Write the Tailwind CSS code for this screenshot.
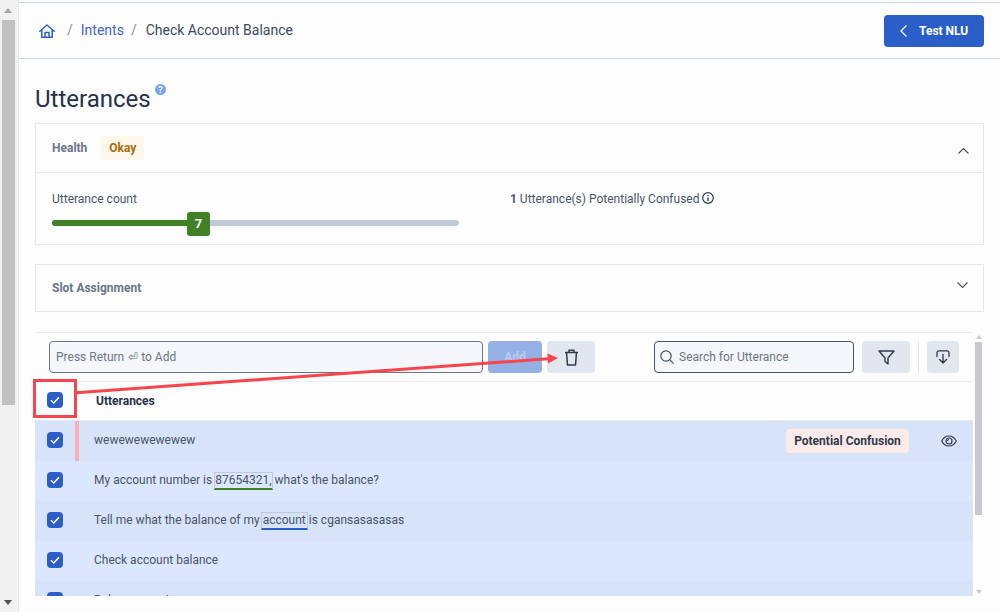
<!DOCTYPE html>
<html>
<head>
<meta charset="utf-8">
<script src="https://cdn.jsdelivr.net/npm/@tailwindcss/browser@4"></script>
</head>
<body class="bg-[#fdfdfd] font-['Roboto',sans-serif] text-[#4a5568]">
<div class="relative flex h-[612px] w-[1000px] overflow-hidden">
  <aside class="flex w-[18px] shrink-0 flex-col items-center bg-[#f1f1f1] pr-[2px]">
    <div class="flex h-[20px] items-center justify-center"><div class="h-0 w-0 border-x-[4px] border-b-[5px] border-x-transparent border-b-[#a3a3a3]"></div></div>
    <div class="h-[385px] w-[13px] bg-[#c1c1c1]"></div>
    <div class="flex-1"></div>
    <div class="flex h-[20px] items-center justify-center"><div class="h-0 w-0 border-x-[4px] border-t-[5px] border-x-transparent border-t-[#505050]"></div></div>
  </aside>
  <main class="flex min-w-0 flex-1 flex-col border-l border-[#e3e9f3]">
    <header class="mt-[2px] flex h-[57px] shrink-0 items-center justify-between border-y border-[#ccd3e0] pr-[16px] pl-[20px]">
      <nav class="flex items-center text-[14px]">
        <svg class="h-[14px] w-[16px] text-[#2b5fc7]" viewBox="0 0 16 14" fill="none" stroke="currentColor" stroke-width="1.5" stroke-linejoin="round" stroke-linecap="round"><path d="M.8 7.200 8 1l7.200 6.200M2.800 5.500v7.800h10.400V5.500M6 13.200V8.600h4v4.600"/></svg>
        <span class="ml-[12px] text-[#8a94a6]">/</span>
        <span class="ml-[8px] text-[#3f67cf]">Intents</span>
        <span class="ml-[7px] text-[#8a94a6]">/</span>
        <span class="ml-[9px] text-[#3e4a5c]">Check Account Balance</span>
      </nav>
      <button class="flex h-[32px] w-[100px] items-center rounded-[4px] bg-[#2b5fc7] pl-[16px] text-[12px] font-bold text-white">
        <svg class="mr-[12px] h-[12px] w-[7px]" viewBox="0 0 7 12" fill="none" stroke="currentColor" stroke-width="1.2"><path d="M6.500.5 1 6l5.500 5.500"/></svg>
        Test NLU
      </button>
    </header>

    <div class="flex min-h-0 flex-1 flex-col pr-[16px] pl-[16px]">
      <div class="flex h-[64px] shrink-0 items-start pt-[24px]">
        <h1 class="text-[24px] leading-[32px] text-[#263249]">Utterances</h1>
        <svg class="mt-[1px] ml-[4px] h-[11px] w-[11px]" viewBox="0 0 12 12"><circle cx="6" cy="6" r="6" fill="#77a3f3"/><text x="6" y="9.500" text-anchor="middle" font-size="9.500" font-weight="700" fill="#fff" font-family="Roboto">?</text></svg>
      </div>

      <section class="h-[122px] shrink-0 border border-[#e4e7f0]">
        <div class="flex h-[49px] items-center justify-between border-b border-[#e4e7f0] pr-[14px] pl-[16px]">
          <div class="flex items-center gap-[14px]">
            <span class="text-[12px] font-bold text-[#6b7688]">Health</span>
            <span class="flex h-[24px] items-center rounded-[4px] bg-[#fdf8ea] px-[8px] text-[12px] font-bold text-[#a86c10]">Okay</span>
          </div>
          <svg class="mt-[6px] h-[6px] w-[11px] text-[#465062]" viewBox="0 0 11 6" fill="none" stroke="currentColor" stroke-width="1.1"><path d="M.5 5.500 5.500.5l5 5"/></svg>
        </div>
        <div class="flex pl-[16px]">
          <div class="w-[458px] shrink-0">
            <div class="pt-[19px] text-[12px] leading-[14px] text-[#4a5568]">Utterance count</div>
            <div class="relative mt-[6px] h-[24px] w-[407px]">
              <div class="absolute top-[8px] left-0 h-[6px] w-full rounded-full bg-[#c2c9d6]"></div>
              <div class="absolute top-[8px] left-0 h-[6px] w-[140px] rounded-full bg-[#3f8226]"></div>
              <div class="absolute top-0 left-[135px] flex h-[24px] w-[23px] items-center justify-center rounded-[3px] bg-[#3f8226] text-[13px] font-bold text-white">7</div>
            </div>
          </div>
          <div class="flex items-start gap-[3px] pt-[19px] text-[12px] leading-[14px] text-[#4a5568]">
            <span><b class="font-bold">1</b> Utterance(s) Potentially Confused</span>
            <svg class="h-[12px] w-[12px] text-[#2f3a4d]" viewBox="0 0 12 12" fill="none" stroke="currentColor" stroke-width="1.200"><circle cx="6" cy="6" r="5.300"/><path d="M6 5.400V9M6 3v1.200" stroke-width="1.400"/></svg>
          </div>
        </div>
      </section>

      <section class="mt-[19px] flex h-[48px] shrink-0 items-center justify-between border border-[#e4e7f0] pr-[15px] pl-[16px]">
        <span class="text-[12px] font-bold text-[#6b7688]">Slot Assignment</span>
        <svg class="mb-[6px] h-[6px] w-[11px] text-[#465062]" viewBox="0 0 11 6" fill="none" stroke="currentColor" stroke-width="1.1"><path d="M.5.5l5 5 5-5"/></svg>
      </section>

      <section class="mt-[20px] flex min-h-0 shrink-0 gap-[1px]">
        <div class="h-[264px] w-[938px] shrink-0 overflow-hidden border-t border-[#ebedf0]">
          <div class="flex h-[49px] items-center border-b border-[#ebedf0] pr-[14px] pl-[14px]">
            <div class="flex h-[32px] w-[434px] items-center rounded-[4px] border border-[#6b7688] bg-[#f6f7fa] pl-[6px] text-[12px] whitespace-pre text-[#6b7688]">Press Return <span class="ml-[1px]">⏎</span> to Add</div>
            <button class="ml-[5px] h-[32px] w-[54px] rounded-[4px] bg-[#95b0e5] text-[12px] font-bold text-[#bccced]">Add</button>
            <button class="ml-[5px] flex h-[32px] w-[48px] items-center justify-center rounded-[4px] bg-[#e2e6ef]">
              <svg class="h-[17px] w-[15px] text-[#2f3a4d]" viewBox="0 0 15 17" fill="none" stroke="currentColor" stroke-width="1.500" stroke-linejoin="round"><path d="M1 3.500h13M5 3.500V1.200h5v2.300M2.500 3.500l1 12.500h8l1-12.500"/></svg>
            </button>
            <div class="ml-auto flex h-[32px] w-[200px] items-center rounded-[4px] border border-[#4a5568] bg-[#f6f7fa] pl-[5px] text-[12px] text-[#6b7688]">
              <svg class="mr-[5px] h-[14px] w-[14px] text-[#4a5568]" viewBox="0 0 14 14" fill="none" stroke="currentColor" stroke-width="1.200"><circle cx="6" cy="6" r="5.200"/><path d="m9.700 9.700 4 4"/></svg>
              Search for Utterance
            </div>
            <button class="ml-[8px] flex h-[32px] w-[48px] items-center justify-center rounded-[4px] bg-[#e2e6ef]">
              <svg class="h-[15px] w-[17px] text-[#2f3a4d]" viewBox="0 0 17 15" fill="none" stroke="currentColor" stroke-width="1.400" stroke-linejoin="round"><path d="M1 1h15l-6 7v6l-3-2.500V8z"/></svg>
            </button>
            <div class="mx-[8px] h-[32px] w-px bg-[#e2e6ef]"></div>
            <button class="flex h-[32px] w-[32px] items-center justify-center rounded-[4px] bg-[#e2e6ef]">
              <svg class="h-[14px] w-[14px] text-[#2f3a4d]" viewBox="0 0 14 14" fill="none" stroke="currentColor" stroke-width="1.300" stroke-linecap="round" stroke-linejoin="round"><path d="M1 6.500V2.500A2 2 0 0 1 3 .8h8a2 2 0 0 1 2 1.700v4M7 4.500v8.500M3.500 9.500 7 13l3.500-3.500"/></svg>
            </button>
          </div>
          <div class="flex h-[39px] items-center border-b border-[#e4e7f0] pl-[12px]">
            <span class="mb-[2px] flex h-[16px] w-[16px] items-center justify-center rounded-[4px] bg-[#2b5fc7]"><svg class="h-[12px] w-[12px]" viewBox="0 0 12 12" fill="none" stroke="#fff" stroke-width="1.500"><path d="m2 6.300 2.800 2.700L10 3.300"/></svg></span>
            <span class="ml-[33px] text-[12px] font-bold text-[#263249]">Utterances</span>
          </div>
          <div class="relative flex h-[40px] items-center bg-[#d7e3f9] pl-[12px] text-[12px] text-[#4a5568]">
            <span class="mb-[2px] flex h-[16px] w-[16px] items-center justify-center rounded-[4px] bg-[#2b5fc7]"><svg class="h-[12px] w-[12px]" viewBox="0 0 12 12" fill="none" stroke="#fff" stroke-width="1.500"><path d="m2 6.300 2.800 2.700L10 3.300"/></svg></span>
            <span class="absolute top-0 left-[40px] h-[40px] w-[4px] bg-[#fbafb2]"></span>
            <span class="mb-[2px] ml-[31px]">wewewewewewew</span>
            <span class="ml-auto flex h-[24px] w-[123px] items-center justify-center rounded-[4px] bg-[#fdebe9] font-bold text-[#2f3a4d]">Potential Confusion</span>
            <svg class="mr-[16px] ml-[32px] h-[12px] w-[16px] text-[#2f3a4d]" viewBox="0 0 16 12" fill="none" stroke="currentColor" stroke-width="1.200"><path d="M.7 6C2.500 2.500 5 1 8 1s5.500 1.500 7.300 5C13.500 9.500 11 11 8 11S2.500 9.500.7 6z"/><circle cx="8" cy="6" r="3"/><path d="M8 4.500A1.500 1.500 0 0 0 6.500 6"/></svg>
          </div>
          <div class="flex h-[40px] items-center bg-[#dae7ff] pl-[12px] text-[12px] text-[#4a5568]">
            <span class="mb-[2px] flex h-[16px] w-[16px] items-center justify-center rounded-[4px] bg-[#2b5fc7]"><svg class="h-[12px] w-[12px]" viewBox="0 0 12 12" fill="none" stroke="#fff" stroke-width="1.500"><path d="m2 6.300 2.800 2.700L10 3.300"/></svg></span>
            <span class="mb-[2px] ml-[31px]">My account number is <span class="-mr-[1px] -ml-[1px] inline-block h-[18px] border border-b-2 border-[#c2c9d6] border-b-[#3f8226] leading-[14px]">87654321,</span> what's the balance?</span>
          </div>
          <div class="flex h-[40px] items-center bg-[#d7e3f9] pl-[12px] text-[12px] text-[#4a5568]">
            <span class="mb-[2px] flex h-[16px] w-[16px] items-center justify-center rounded-[4px] bg-[#2b5fc7]"><svg class="h-[12px] w-[12px]" viewBox="0 0 12 12" fill="none" stroke="#fff" stroke-width="1.500"><path d="m2 6.300 2.800 2.700L10 3.300"/></svg></span>
            <span class="mb-[2px] ml-[31px]">Tell me what the balance of my <span class="-mr-[2px] -ml-[2px] inline-block h-[18px] border border-b-2 border-[#c2c9d6] border-b-[#2b5fc7] px-[1px] leading-[14px]">account</span> is cgansasasasas</span>
          </div>
          <div class="flex h-[40px] items-center bg-[#dae7ff] pl-[12px] text-[12px] text-[#4a5568]">
            <span class="mb-[2px] flex h-[16px] w-[16px] items-center justify-center rounded-[4px] bg-[#2b5fc7]"><svg class="h-[12px] w-[12px]" viewBox="0 0 12 12" fill="none" stroke="#fff" stroke-width="1.500"><path d="m2 6.300 2.800 2.700L10 3.300"/></svg></span>
            <span class="mb-[2px] ml-[31px]">Check account balance</span>
          </div>
          <div class="flex h-[40px] items-center bg-[#d7e3f9] pl-[12px] text-[12px] text-[#4a5568]">
            <span class="mb-[2px] flex h-[16px] w-[16px] items-center justify-center rounded-[4px] bg-[#2b5fc7]"><svg class="h-[12px] w-[12px]" viewBox="0 0 12 12" fill="none" stroke="#fff" stroke-width="1.500"><path d="m2 6.300 2.800 2.700L10 3.300"/></svg></span>
            <span class="mb-[2px] ml-[31px]">Balance enquiry</span>
          </div>
        </div>
        <div class="flex w-[9px] shrink-0 flex-col items-center">
          <div class="flex h-[10px] items-center"><div class="h-0 w-0 border-x-[3px] border-b-[4px] border-x-transparent border-b-[#c9c9c9]"></div></div>
          <div class="h-[173px] w-[7px] bg-[#c7c8cc]"></div>
          <div class="flex-1"></div>
          <div class="flex h-[8px] items-center"><div class="h-0 w-0 border-x-[3px] border-t-[4px] border-x-transparent border-t-[#c9c9c9]"></div></div>
        </div>
      </section>
    </div>
  </main>

  <div class="absolute top-[379px] left-[33px] h-[39px] w-[44px] border-[3px] border-[#f8444c]"></div>
  <svg class="absolute top-0 left-0 h-[612px] w-[1000px]" viewBox="0 0 1000 612" fill="none">
    <path d="M76 392.700 548 358.800" stroke="#f8444c" stroke-width="3"/>
    <path d="M558 358 547.500 353.500 548 363.500z" fill="#f8444c"/>
  </svg>
</div>
</body>
</html>
